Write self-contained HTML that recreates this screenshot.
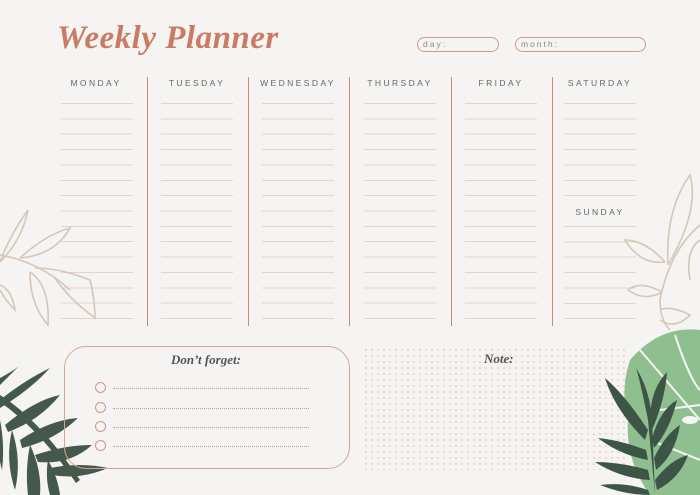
<!DOCTYPE html>
<html><head><meta charset="utf-8"><style>
*{margin:0;padding:0;box-sizing:border-box}
body{width:700px;height:495px;background:#f5f4f2;position:relative;overflow:hidden;font-family:"Liberation Sans",sans-serif}
.title{position:absolute;left:57px;top:20px;font-family:"Liberation Serif",serif;font-style:italic;font-weight:bold;font-size:33px;color:#c97b63;letter-spacing:0.5px}
.pill{position:absolute;top:37px;height:15px;border:1.3px solid #d49a86;border-radius:8px;font-size:8.5px;letter-spacing:2px;color:#888;padding-left:5px;line-height:12px}
.day{position:absolute;top:78px;width:90px;text-align:center;font-size:8.5px;letter-spacing:2.4px;color:#666}
.lines{position:absolute;width:72px;background:repeating-linear-gradient(to bottom,#e3d3ca 0 1px,transparent 1px 15.36px)}
.div{position:absolute;top:77px;height:249px;width:1.4px;background:#c98a76}
.box{position:absolute;left:64px;top:346px;width:286px;height:123px;border:1.3px solid #d9a395;border-radius:22px}
.h{position:absolute;font-family:"Liberation Serif",serif;font-style:italic;font-weight:bold;font-size:13px;color:#555}
.c{position:absolute;left:95px;width:11px;height:11px;border:1.3px solid #d39585;border-radius:50%}
.dl{position:absolute;left:113px;width:196px;border-top:1px dotted #aaa}
.dots{position:absolute;left:363px;top:347px;width:262px;height:123px;background-image:radial-gradient(circle,#e8cfc5 0.8px,transparent 1.1px);background-size:6px 6px}
</style></head><body>
<div class="title">Weekly Planner</div>
<div class="pill" style="left:417px;width:82px">day:</div>
<div class="pill" style="left:515px;width:131px">month:</div>

<div class="day" style="left:51px">MONDAY</div>
<div class="day" style="left:152px">TUESDAY</div>
<div class="day" style="left:253px">WEDNESDAY</div>
<div class="day" style="left:355px">THURSDAY</div>
<div class="day" style="left:456px">FRIDAY</div>
<div class="day" style="left:555px">SATURDAY</div>
<div class="day" style="left:555px;top:207px">SUNDAY</div>

<div class="lines" style="left:61px;top:103px;height:216px"></div>
<div class="lines" style="left:161px;top:103px;height:216px"></div>
<div class="lines" style="left:262px;top:103px;height:216px"></div>
<div class="lines" style="left:364px;top:103px;height:216px"></div>
<div class="lines" style="left:465px;top:103px;height:216px"></div>
<div class="lines" style="left:564px;top:103px;height:93px"></div>
<div class="lines" style="left:564px;top:226px;height:93px"></div>

<div class="div" style="left:147px"></div>
<div class="div" style="left:248px"></div>
<div class="div" style="left:349px"></div>
<div class="div" style="left:451px"></div>
<div class="div" style="left:552px"></div>

<div class="dots"></div>
<div class="h" style="left:484px;top:351px">Note:</div>

<svg style="position:absolute;left:0;top:0" width="700" height="495" viewBox="0 0 700 495">
<g fill="none" stroke="#d6c6b8" stroke-width="1.6">
<path d="M0 255 Q40 262 70 290"/>
<path d="M0 262 Q10 235 28 210 Q22 240 0 262"/>
<path d="M20 258 Q45 235 70 228 Q55 255 20 258"/>
<path d="M35 268 Q60 268 90 280 Q95 300 95 318 Q70 300 55 278"/>
<path d="M30 272 Q50 285 48 325 Q30 305 30 272"/>
<path d="M0 285 Q12 290 15 310 Q5 300 0 290"/>
<path d="M700 225 Q670 250 660 300 Q660 320 670 330"/>
<path d="M668 265 Q665 210 690 175 Q700 210 668 265"/>
<path d="M665 262 Q645 240 625 240 Q640 265 665 262"/>
<path d="M662 292 Q640 280 628 290 Q645 302 662 292"/>
<path d="M700 240 Q685 250 690 280"/>
<path d="M660 310 Q670 305 690 315 Q675 330 660 320"/>
</g>
<path d="M630 360 Q660 325 700 330 L700 495 L650 495 Q625 460 628 420 Q620 390 630 360Z" fill="#8fbf8f"/>
<g stroke="#f5f4f2" stroke-width="2" fill="none">
<path d="M640 350 L700 420"/><path d="M675 335 Q690 380 700 390"/><path d="M660 410 L700 405"/><path d="M650 440 L700 460"/>
</g>
<ellipse cx="690" cy="420" rx="8" ry="4" fill="#f5f4f2"/>
<g fill="#3d5546">
<path d="M655 495 L648 420 Q640 380 636 368 Q650 390 652 420Z"/>
<path d="M648 430 Q625 395 605 378 Q615 410 645 440Z"/>
<path d="M650 420 Q650 390 667 372 Q665 400 652 430Z"/>
<path d="M652 438 Q660 410 677 400 Q670 430 654 448Z"/>
<path d="M646 450 Q620 440 598 438 Q620 455 648 460Z"/>
<path d="M654 458 Q665 435 680 425 Q675 455 656 470Z"/>
<path d="M648 470 Q620 462 595 462 Q620 478 650 480Z"/>
<path d="M655 480 Q670 460 688 455 Q680 478 657 490Z"/>
<path d="M648 490 Q625 482 600 485 Q625 495 650 495Z"/>
</g>
<g fill="#44594b">
<path d="M0 378 Q15 370 20 365 Q10 375 0 385Z"/>
<path d="M0 400 Q25 380 50 368 Q30 390 0 408Z"/>
<path d="M5 425 Q35 400 60 395 Q40 420 8 432Z"/>
<path d="M20 440 Q50 420 78 418 Q55 440 22 448Z"/>
<path d="M35 455 Q65 445 92 445 Q70 465 38 462Z"/>
<path d="M50 468 Q80 462 108 468 Q80 480 52 475Z"/>
<path d="M0 420 Q5 445 2 470 Q-5 445 0 420Z"/>
<path d="M12 430 Q22 460 15 490 Q5 460 12 430Z"/>
<path d="M30 445 Q42 470 40 495 L28 495 Q25 470 30 445Z"/>
<path d="M48 460 Q58 478 60 495 L50 495 Q45 478 48 460Z"/>
<path d="M0 395 Q40 420 80 480 L76 483 Q40 430 0 402Z"/>
</g>
</svg>

<div class="box"></div>
<div class="h" style="left:171px;top:352px">Don’t forget:</div>
<div class="c" style="top:382px"></div><div class="dl" style="top:388px"></div>
<div class="c" style="top:402px"></div><div class="dl" style="top:408px"></div>
<div class="c" style="top:421px"></div><div class="dl" style="top:427px"></div>
<div class="c" style="top:440px"></div><div class="dl" style="top:446px"></div>
</body></html>
